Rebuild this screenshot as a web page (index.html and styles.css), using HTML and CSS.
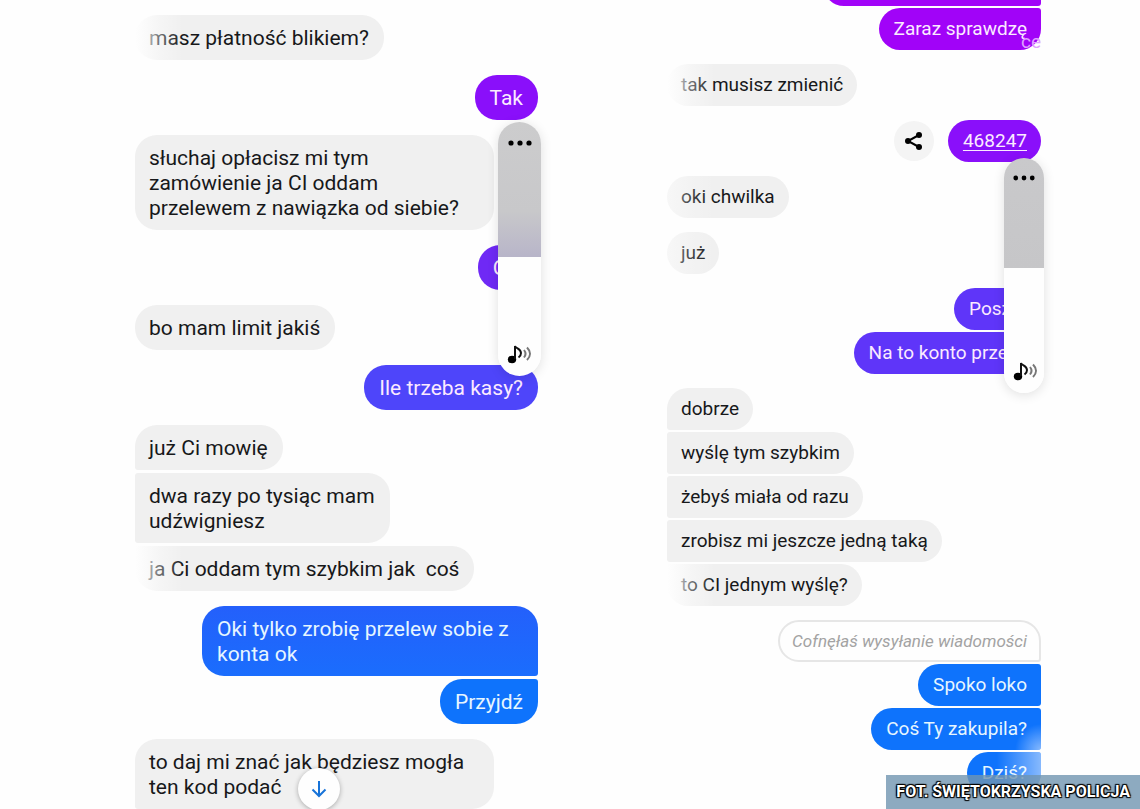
FILE: index.html
```html
<!DOCTYPE html>
<html lang="pl">
<head>
    <meta charset="UTF-8">
    <meta name="viewport" content="width=device-width, initial-scale=1.0">
    <title>Rozmowa</title>
    <link rel="stylesheet" href="styles.css">
</head>
<body>
    <main class="page">
        <section class="chat chat-left">
            <div class="group in"><p class="bubble fade">masz płatność blikiem?</p></div>
            <div class="group out"><p class="bubble violet">Tak</p></div>
            <div class="group in"><p class="bubble">słuchaj opłacisz mi tym zamówienie ja CI oddam przelewem z nawiązka od siebie?</p></div>
            <div class="group out"><p class="bubble purple">Oki</p></div>
            <div class="group in"><p class="bubble">bo mam limit jakiś</p></div>
            <div class="group out"><p class="bubble indigo">Ile trzeba kasy?</p></div>
            <div class="group in">
                <p class="bubble">już Ci mowię</p>
                <p class="bubble">dwa razy po tysiąc mam<br>udźwigniesz</p>
                <p class="bubble fade">ja Ci oddam tym szybkim jak&nbsp; coś</p>
            </div>
            <div class="group out">
                <p class="bubble royal">Oki tylko zrobię przelew sobie z konta ok</p>
                <p class="bubble blue">Przyjdź</p>
            </div>
            <div class="group in open"><p class="bubble">to daj mi znać jak będziesz mogła ten kod podać</p></div>

            <div class="volume">
                <input class="volume-range" type="range" min="0" max="100" value="47" aria-label="Głośność">
                <button class="volume-more" type="button" aria-label="Więcej">
                    <svg width="24" height="6" viewBox="0 0 24 6"><circle cx="3" cy="3" r="2.6"/><circle cx="12" cy="3" r="2.6"/><circle cx="21" cy="3" r="2.6"/></svg>
                </button>
                <svg class="volume-note" width="26" height="20" viewBox="0 0 26 20">
                    <ellipse cx="5" cy="15.5" rx="4.2" ry="3.7"/>
                    <path class="note" d="M8 15V2c1 3 5.500 2 6 7 0 2-1 3.500-2.500 4.500"/>
                    <path class="wave" d="M17 6c2 2.500 2 5 0 7.500M20 3.500c4 4 4 8.500 0 12.500"/>
                </svg>
            </div>

            <button class="scroll-down" type="button" aria-label="Przewiń w dół">
                <svg width="18" height="20" viewBox="0 0 18 20"><path d="M9 2v15M2.5 10.5 9 17l6.5-6.5"/></svg>
            </button>
        </section>

        <section class="chat chat-right">
            <div class="group out open">
                <p class="bubble magenta scrolled"></p>
                <p class="bubble magenta">Zaraz sprawdzę<span class="badge">ce</span></p>
            </div>
            <div class="group in"><p class="bubble fade">tak musisz zmienić</p></div>
            <div class="group out code-row">
                <button class="share" type="button" aria-label="Udostępnij">
                    <svg width="20" height="20" viewBox="0 0 20 20"><path d="M15 4 4 10l11 6"/><circle cx="15" cy="4" r="3"/><circle cx="4" cy="10" r="3"/><circle cx="15" cy="16" r="3"/></svg>
                </button>
                <p class="bubble violet"><a class="code" href="#">468247</a></p>
            </div>
            <div class="group in"><p class="bubble fade-light">oki chwilka</p></div>
            <div class="group in"><p class="bubble fade-light">już</p></div>
            <div class="group out">
                <p class="bubble grape">Poszło</p>
                <p class="bubble grape">Na to konto przelej</p>
            </div>
            <div class="group in">
                <p class="bubble">dobrze</p>
                <p class="bubble">wyślę tym szybkim</p>
                <p class="bubble">żebyś miała od razu</p>
                <p class="bubble">zrobisz mi jeszcze jedną taką</p>
                <p class="bubble fade">to CI jednym wyślę?</p>
            </div>
            <div class="group out open">
                <p class="bubble unsent">Cofnęłaś wysyłanie wiadomości</p>
                <p class="bubble blue">Spoko loko</p>
                <p class="bubble blue glow-start">Coś Ty zakupila?</p>
                <p class="bubble blue glow">Dziś?</p>
            </div>

            <div class="volume">
                <input class="volume-range" type="range" min="0" max="100" value="53" aria-label="Głośność">
                <button class="volume-more" type="button" aria-label="Więcej">
                    <svg width="22" height="6" viewBox="0 0 24 6"><circle cx="3" cy="3" r="2.6"/><circle cx="12" cy="3" r="2.6"/><circle cx="21" cy="3" r="2.6"/></svg>
                </button>
                <svg class="volume-note" width="26" height="20" viewBox="0 0 26 20">
                    <ellipse cx="5" cy="15.5" rx="4.2" ry="3.7"/>
                    <path class="note" d="M8 15V2c1 3 5.500 2 6 7 0 2-1 3.500-2.500 4.500"/>
                    <path class="wave" d="M17 6c2 2.500 2 5 0 7.500M20 3.500c4 4 4 8.500 0 12.500"/>
                </svg>
            </div>
        </section>

        <footer class="credit">FOT. ŚWIĘTOKRZYSKA POLICJA</footer>
    </main>
</body>
</html>
```

FILE: styles.css
```css
* {
    box-sizing: border-box;
}
body {
    margin: 0;
    background: #fefefe;
    color: #17181a;
    font-family: Roboto, "Liberation Sans", sans-serif;
}
.page {
    position: relative;
    display: grid;
    grid-template-columns: 1fr 1fr;
    height: 100vh;
    overflow: hidden;
}
.chat {
    position: relative;
    display: flex;
    flex-direction: column;
}
.chat-left {
    --radius: 22px;
    gap: 15px;
    padding: 15px 32px 0 135px;
    font-size: 21px;
    line-height: 25px;
}
.chat-right {
    --radius: 21px;
    gap: 14px;
    margin-top: -36px;
    padding: 0 99px 0 97px;
    font-size: 19px;
    line-height: 24px;
}

/* messages */
.group {
    display: flex;
    flex-direction: column;
    align-items: flex-start;
    gap: 3px;
}
.chat-right .group {
    gap: 2px;
}
.out {
    align-items: flex-end;
}
.bubble {
    position: relative;
    margin: 0;
    padding: 11px 15px 9px 14px;
    max-width: 359px;
    border-radius: var(--radius);
    background: #f0f0f0;
}
.chat-right .bubble {
    padding: 9px 14px;
}
.out .bubble {
    max-width: 336px;
    padding-left: 15px;
    color: #fbeaff;
}
.in .bubble:not(:last-child),
.in.open .bubble {
    border-bottom-left-radius: 3px;
}
.in .bubble:not(:first-child) {
    border-top-left-radius: 3px;
}
.out .bubble:not(:last-child),
.chat-right .out.open:last-of-type .bubble {
    border-bottom-right-radius: 3px;
}
.out .bubble:not(:first-child) {
    border-top-right-radius: 3px;
}
.chat .code-row .bubble {
    border-radius: var(--radius);
}
.chat .magenta {
    background: #a103f8;
}
.chat .violet {
    background: #8a0ffa;
}
.chat .purple {
    background: #6f29f5;
}
.chat .grape {
    background: #5f35f9;
}
.chat .indigo {
    background: #4e45fa;
}
.chat .royal {
    background: linear-gradient(#2460fb, #1a6dfd);
    color: #e6f6ff;
}
.chat .blue {
    background: #0e73fc;
    color: #e6f6ff;
}
.chat .scrolled {
    width: 218px;
    height: 42px;
}
.fade::after,
.fade-light::after {
    content: "";
    position: absolute;
    inset: 0 auto 0 0;
    width: 48px;
    background: linear-gradient(90deg, #fefefe, rgba(254, 254, 254, 0.4) 50%, rgba(254, 254, 254, 0));
}
.fade-light::after {
    opacity: 0.5;
}
.badge {
    position: absolute;
    right: 0;
    bottom: 0;
    width: 20px;
    height: 16px;
    overflow: hidden;
    color: #dfa0ff;
    line-height: 16px;
}
.chat-right .unsent {
    padding: 7px 12px;
    border: 2px solid #e6e6e6;
    background: #fefefe;
    color: #a3a3a3;
    font-size: 17px;
    font-style: italic;
}
.glow-start::after,
.glow::after {
    content: "";
    position: absolute;
    inset: 0;
    border-radius: inherit;
    background: radial-gradient(circle at 100% 100%, rgba(255, 255, 255, 0.5), rgba(255, 255, 255, 0) 26px);
}
.glow::after {
    background: linear-gradient(90deg, rgba(255, 255, 255, 0) 40%, rgba(255, 255, 255, 0.5));
}

/* one-time code */
.code-row {
    flex-direction: row;
    justify-content: flex-end;
    align-items: center;
}
.chat-right .code-row {
    gap: 14px;
}
.code {
    color: inherit;
    text-underline-offset: 3px;
    text-decoration-thickness: 1px;
}
.share {
    display: grid;
    place-items: center;
    width: 40px;
    height: 40px;
    padding: 0;
    border: 0;
    border-radius: 50%;
    background: #f4f4f4;
}
.share path {
    fill: none;
    stroke: #000;
    stroke-width: 2;
}

/* volume panel lying over the chat */
.volume {
    position: absolute;
    top: 122px;
    right: 29px;
    width: 43px;
    height: 254px;
    border-radius: 22px;
    box-shadow: 0 2px 12px rgba(0, 0, 0, 0.12);
    overflow: hidden;
}
.chat-right .volume {
    top: 194px;
    right: 96px;
    width: 40px;
    height: 235px;
}
.volume-range {
    display: block;
    width: 100%;
    height: 100%;
    margin: 0;
    appearance: none;
    writing-mode: vertical-lr;
    direction: rtl;
    background: linear-gradient(#cccccd, #c8c8ca 35%, #b8b5c9 53%, #fefefe 53%);
}
.chat-right .volume-range {
    background: linear-gradient(#c9c9cb, #c6c6c8 47%, #fefefe 47%);
}
.volume-range::-webkit-slider-thumb {
    appearance: none;
    width: 1px;
    height: 1px;
}
.volume-more {
    position: absolute;
    top: 12px;
    left: 0;
    display: grid;
    place-items: center;
    width: 100%;
    height: 18px;
    padding: 0;
    border: 0;
    background: none;
}
.chat-right .volume-more {
    top: 11px;
}
.volume-note {
    position: absolute;
    bottom: 12px;
    left: 9px;
}
.note,
.wave {
    fill: none;
    stroke: #111;
    stroke-width: 2;
}
.wave {
    stroke: #777;
}

.scroll-down {
    position: absolute;
    top: 768px;
    left: 298px;
    display: grid;
    place-items: center;
    width: 42px;
    height: 42px;
    padding: 0;
    border: 0;
    border-radius: 50%;
    background: #fefefe;
    box-shadow: 0 1px 5px rgba(0, 0, 0, 0.3);
}
.scroll-down path {
    fill: none;
    stroke: #1773d8;
    stroke-width: 2;
}

.credit {
    position: absolute;
    right: 0;
    bottom: 0;
    padding: 0 10px;
    background: rgba(112, 149, 176, 0.8);
    color: #fff;
    font-family: Impact, Roboto, sans-serif;
    font-size: 16px;
    font-weight: 700;
    line-height: 34px;
    white-space: nowrap;
    text-shadow: 1px 1px 1px #000, -1px -1px 1px #000, 1px -1px 1px #000, -1px 1px 1px #000;
}
```
